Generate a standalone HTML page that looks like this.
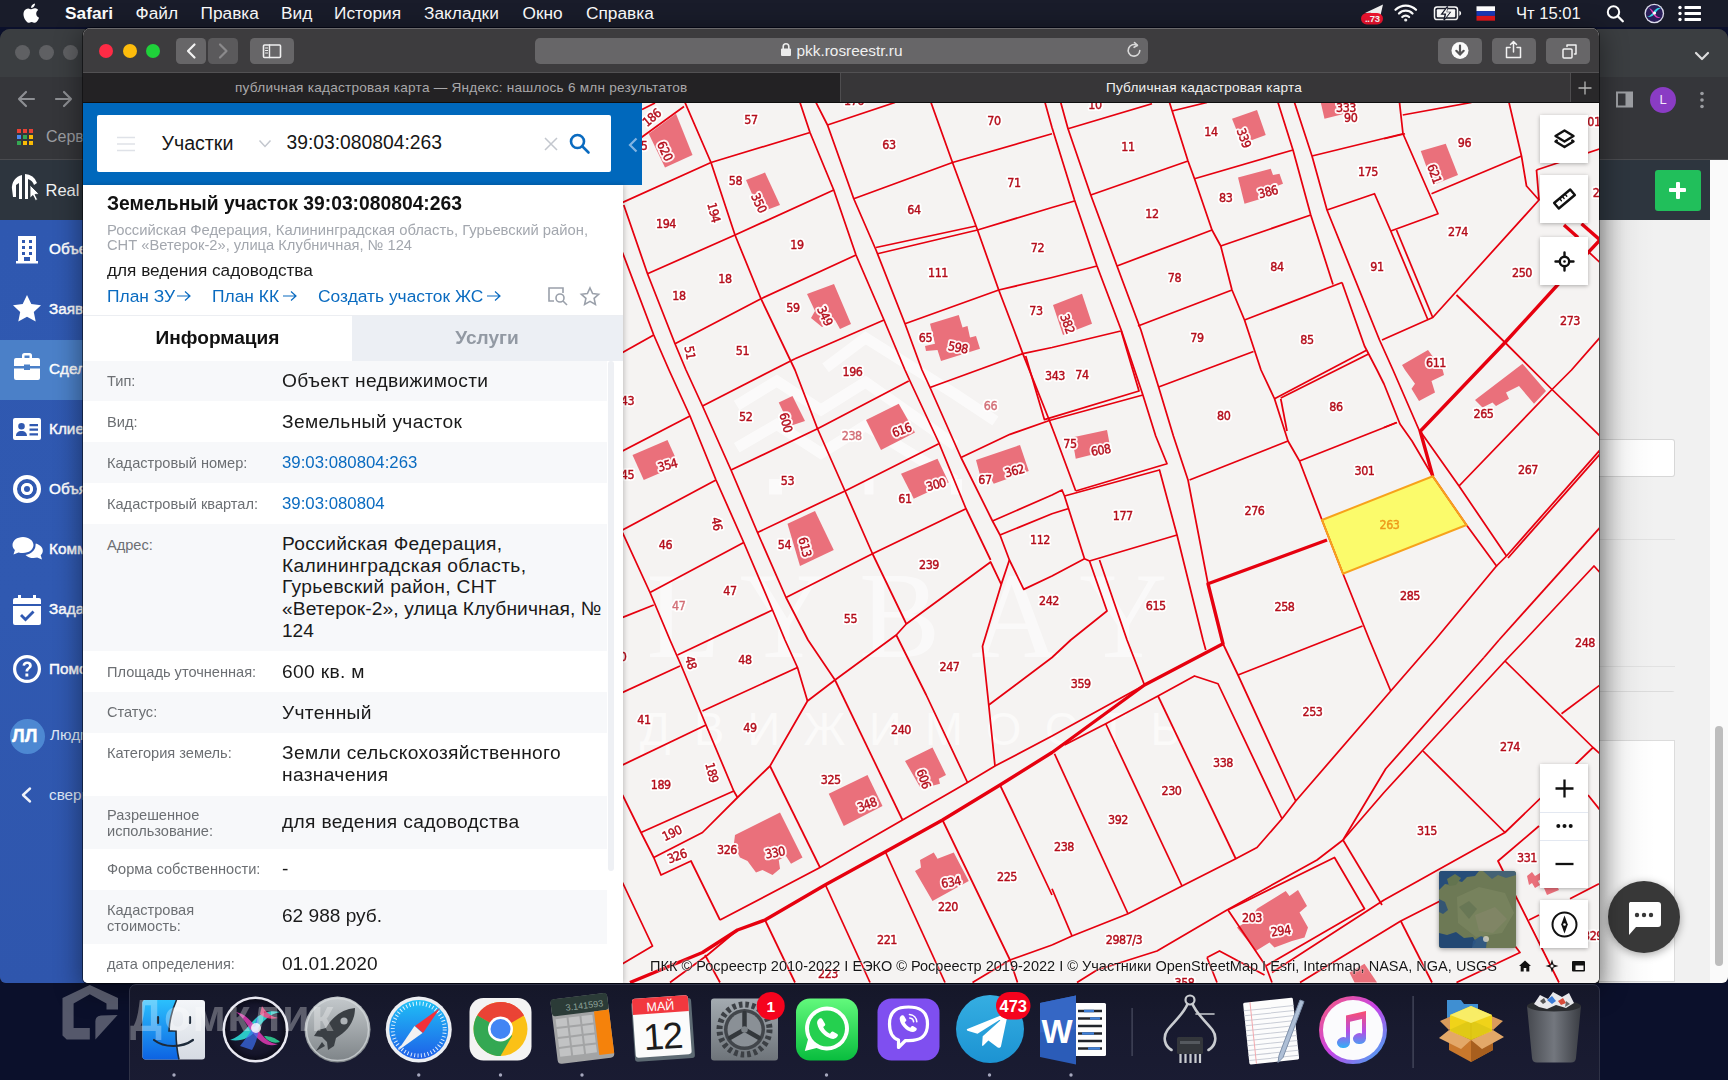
<!DOCTYPE html>
<html lang="ru">
<head>
<meta charset="utf-8">
<title>Публичная кадастровая карта</title>
<style>
*{box-sizing:border-box;margin:0;padding:0}
html,body{width:1728px;height:1080px;overflow:hidden;background:#13172b;font-family:"Liberation Sans",sans-serif;}
.abs{position:absolute}
#desk{position:absolute;left:0;top:0;width:1728px;height:1080px;background:#0b102b;overflow:hidden}
/* menu bar */
#menubar{position:absolute;left:0;top:0;width:1728px;height:27px;background:#191c2a;color:#fff;font-size:17.300px;line-height:27px;white-space:nowrap}
#menubar span{position:absolute;top:0}
/* chrome window behind */
#chrome{position:absolute;left:0;top:29px;width:1728px;height:954px;background:#35363a;border-radius:10px 10px 6px 6px;overflow:hidden}
/* safari */
#safari{position:absolute;left:83px;top:28px;width:1516px;height:955px;background:#f5f3f2;border-radius:8px 8px 5px 5px;overflow:hidden;box-shadow:0 0 0 1px rgba(0,0,0,.5),0 6px 26px 3px rgba(0,0,0,.4)}
#stool{position:absolute;left:0;top:0;width:1516px;height:45px;background:#39383a;border-top:1px solid #5a595b}
#stabs{position:absolute;left:0;top:45px;width:1516px;height:30px;background:#1f1e20;border-top:1px solid #4c4b4d;border-bottom:1px solid #0c0c0d;color:#b4b4b4;font-size:13px;line-height:28px}
.tbbtn{position:absolute;top:9px;height:27px;background:#656466;border-radius:5px}
/* pkk */
#pkkhead{position:absolute;left:0;top:75px;width:558px;height:82px;background:#0a67b8}
#search{position:absolute;left:14px;top:12px;width:514px;height:57px;background:#fff;border-radius:2px}
#panel{position:absolute;left:0;top:157px;width:539px;height:797px;background:#fff;box-shadow:2px 0 6px rgba(0,0,0,.18)}
.row{position:absolute;left:0;width:524px}
.row.g{background:#f7f8fa}
.lab{position:absolute;left:24px;font-size:14px;color:#6c6f73;line-height:15.5px}
.val{position:absolute;left:199px;font-size:18px;color:#1a1a1a;line-height:21.5px;white-space:nowrap}
.val.lnk{font-size:16px;color:#0a6bc0}
a{color:#0a6bc0;text-decoration:none}
.mbtn{background:#fff;box-shadow:0 1px 4px rgba(0,0,0,.3)}
</style>
</head>
<body>
<div id="desk">

<!-- ===== background chrome window ===== -->
<div id="chrome">
  <div class="abs" style="left:0;top:0;width:1728px;height:48px;background:#3b3e41"></div>
  <div class="abs" style="left:0;top:48px;width:1728px;height:83px;background:#35363a"></div>
  <div class="abs" style="left:0;top:130px;width:1728px;height:1px;background:#4a4b4f"></div>
  <!-- traffic lights (inactive) -->
  <div class="abs" style="left:15px;top:16px;width:15px;height:15px;border-radius:50%;background:#5f6063"></div>
  <div class="abs" style="left:39px;top:16px;width:15px;height:15px;border-radius:50%;background:#5f6063"></div>
  <div class="abs" style="left:63px;top:16px;width:15px;height:15px;border-radius:50%;background:#5f6063"></div>
  <!-- nav arrows -->
  <svg class="abs" style="left:14px;top:58px" width="70" height="24" viewBox="0 0 70 24" fill="none" stroke="#8d8f93" stroke-width="2.2" stroke-linecap="round" stroke-linejoin="round"><path d="M20 12H5M12 5l-7 7 7 7"/><path d="M42 12h15M50 5l7 7-7 7"/></svg>
  <!-- apps grid -->
  <svg class="abs" style="left:17px;top:100px" width="18" height="18" viewBox="0 0 18 18"><g><rect x="0" y="0" width="4" height="4" fill="#e94235"/><rect x="6" y="0" width="4" height="4" fill="#e94235"/><rect x="12" y="0" width="4" height="4" fill="#e94235"/><rect x="0" y="6" width="4" height="4" fill="#4a8af4"/><rect x="6" y="6" width="4" height="4" fill="#35a853"/><rect x="12" y="6" width="4" height="4" fill="#fabb05"/><rect x="0" y="12" width="4" height="4" fill="#35a853"/><rect x="6" y="12" width="4" height="4" fill="#fabb05"/><rect x="12" y="12" width="4" height="4" fill="#fabb05"/></g></svg>
  <div class="abs" style="left:46px;top:98px;font-size:16px;color:#9c9ea2;line-height:20px">Сервисы</div>
  <!-- page header left -->
  <div class="abs" style="left:0;top:131px;width:1710px;height:60px;background:#2d353e"></div>
  <div class="abs" style="left:45.500px;top:150px;font-size:16.500px;color:#f4f4f4;line-height:22px">Real</div>
  <svg class="abs" style="left:10px;top:142px" width="34" height="34" viewBox="0 0 34 34"><path d="M2 18a13 13 0 0 1 10-14v24H9V12l-3 2v12H3z" fill="#fff"/><path d="M15 3a13 13 0 0 1 12 9l-3 2a9 9 0 0 0-6-6v20h-3z" fill="#fff"/><path d="M20 14l9 9-4 .5 2.500 5-2 1-2.500-5-3 2.500z" fill="#fff" stroke="#2d353e" stroke-width=".8"/></svg>
  <!-- sidebar -->
  <div class="abs" style="left:0;top:191px;width:90px;height:764px;background:linear-gradient(180deg,#2f58b0 0%,#3059b1 50%,#2f56ad 100%)"></div>
  <div class="abs" style="left:0;top:311px;width:90px;height:60px;background:#4b80c8"></div>
  <!-- right side page -->
  <div class="abs" style="left:1599px;top:191px;width:111px;height:764px;background:#f1f1f1"></div>
  <div class="abs" style="left:1710px;top:131px;width:18px;height:824px;background:#fafafa"></div>
  <div class="abs" style="left:1715px;top:697px;width:8px;height:240px;border-radius:4px;background:#bdbdbd"></div>
  <div class="abs" style="left:1655px;top:141px;width:46px;height:41px;border-radius:3px;background:#21bf5b"></div>
  <div class="abs" style="left:1669px;top:159px;width:17px;height:4px;background:#fff;border-radius:1px"></div>
  <div class="abs" style="left:1675.500px;top:152.500px;width:4px;height:17px;background:#fff;border-radius:1px"></div>
</div>

<!-- ===== menubar ===== -->
<div id="menubar">
  <svg class="abs" style="left:22px;top:2px" width="20" height="22" viewBox="0 0 20 22" fill="#fff"><path d="M14.200 11.600c0-2.300 1.900-3.400 2-3.500-1.100-1.600-2.800-1.800-3.400-1.800-1.400-.1-2.800.9-3.500.9-.7 0-1.900-.8-3.100-.8-1.600 0-3.100.9-3.900 2.400-1.700 2.900-.4 7.200 1.200 9.500.8 1.100 1.700 2.400 3 2.400 1.200 0 1.700-.8 3.100-.8 1.500 0 1.900.8 3.200.8 1.300 0 2.100-1.200 2.900-2.300.9-1.300 1.300-2.600 1.300-2.700 0 0-2.800-1-2.800-4.100z"/><path d="M12 4.500c.7-.8 1.100-1.900 1-3-1 .1-2.100.7-2.800 1.500-.6.700-1.200 1.800-1 2.900 1.100.1 2.100-.5 2.800-1.400z"/></svg>
  <span style="left:65px;font-weight:bold">Safari</span>
  <span style="left:135.500px">Файл</span>
  <span style="left:200.500px">Правка</span>
  <span style="left:281px">Вид</span>
  <span style="left:334px">История</span>
  <span style="left:424px">Закладки</span>
  <span style="left:522.500px">Окно</span>
  <span style="left:586px">Справка</span>
  <span style="left:1516px;font-size:16.600px">Чт 15:01</span>
  <svg class="abs" style="left:1355px;top:0" width="360" height="27" viewBox="1355 0 360 27" fill="none">
    <path d="M1365 13l18-8.500-3 13-6-3-2.500 3-.8-4.800z" fill="#f2f2f2"/>
    <rect x="1361" y="13" width="22" height="11.500" rx="5.750" fill="#f0142f"/>
    <text x="1372.300" y="22.300" font-family="'Liberation Sans',sans-serif" font-size="9.500" font-weight="bold" fill="#fff" text-anchor="middle" letter-spacing="-.3">..73</text>
    <g stroke="#fff" stroke-width="2.300" stroke-linecap="round"><path d="M1395.500 9.800a14.500 14.500 0 0 1 20.500 0"/><path d="M1399 13.500a9.500 9.500 0 0 1 13.500 0"/><path d="M1402.300 17a4.800 4.800 0 0 1 6.800 0"/></g><circle cx="1405.700" cy="20" r="1.600" fill="#fff"/>
    <rect x="1434.500" y="7" width="23" height="12.500" rx="2.600" stroke="#fff" stroke-width="1.500"/><path d="M1459.300 10.800v5c1.300-.3 1.800-1.500 1.800-2.500s-.5-2.200-1.800-2.500z" fill="#fff"/><rect x="1436.800" y="9.200" width="18.400" height="8.100" rx="1" fill="#fff"/><path d="M1447.600 6.500l-5.800 7.500h3.600l-1.400 6 5.900-7.600h-3.700z" fill="#171a2b" stroke="#171a2b" stroke-width="1.400"/><path d="M1447.400 7.500l-4.500 6h3.300l-1 4.800 4.600-6.100h-3.300z" fill="#fff"/>
    <rect x="1476.500" y="6.300" width="18.500" height="4.800" fill="#fff"/><rect x="1476.500" y="11.100" width="18.500" height="4.800" fill="#1939b7"/><rect x="1476.500" y="15.900" width="18.500" height="4.800" fill="#e4181c"/>
    <circle cx="1613.500" cy="12" r="5.700" stroke="#fff" stroke-width="2"/><path d="M1617.800 16.300l5 5" stroke="#fff" stroke-width="2.300" stroke-linecap="round"/>
    <circle cx="1654.300" cy="13.500" r="9.800" fill="#dcdcec"/><circle cx="1654.300" cy="13.500" r="8.500" fill="#2a1f5a"/><path d="M1647 17c4-1 6-5 8-7 2-2 4-2.500 6-2-3 1-4 3-6 5.500-2 2.500-4 4-8 3.500z" fill="#35d6e6"/><path d="M1649 8c3 1 4.500 3.500 6 6 1.500 2 3 3.500 5.500 3.500-3 1.500-5.500-.5-7.200-3-1.500-2.300-2.500-4.700-4.300-6.500z" fill="#e43fb4"/><circle cx="1654.500" cy="13" r="1.600" fill="#fff"/>
    <g fill="#fff"><circle cx="1680" cy="7.500" r="1.700"/><circle cx="1680" cy="13.500" r="1.700"/><circle cx="1680" cy="19.500" r="1.700"/><rect x="1684.500" y="6.100" width="16.500" height="2.800" rx=".6"/><rect x="1684.500" y="12.100" width="16.500" height="2.800" rx=".6"/><rect x="1684.500" y="18.100" width="16.500" height="2.800" rx=".6"/></g>
  </svg>
</div>

<!-- chrome page sidebar items (page coords) -->
<div class="abs" style="left:0;top:0;width:1728px;height:1080px;color:#fff;font-size:15.300px;font-weight:normal;-webkit-text-stroke:.45px #fff;white-space:nowrap">
<svg class="abs" style="left:10px;top:232px" width="36" height="590" viewBox="0 0 36 590" fill="#fff">
<path d="M8 4h18v26h-6v-5h-6v5H8zM12 8v3h3V8zm7 0v3h3V8zm-7 6v3h3v-3zm7 0v3h3v-3zm-7 6v3h3v-3zm7 0v3h3v-3z" fill-rule="evenodd"/><rect x="6" y="29" width="22" height="2.500"/>
<path d="M17 63l4.300 9 9.700 1.200-7.200 6.700 1.900 9.600L17 84.700 8.300 89.500l1.900-9.600L3 73.200 12.700 72z"/>
<path d="M12 126v-2.500a2.500 2.500 0 0 1 2.500-2.500h5a2.500 2.500 0 0 1 2.500 2.500V126h6a2 2 0 0 1 2 2v6h-10v-1.500h-6V134H4v-6a2 2 0 0 1 2-2zm2.500 0h5v-2.500h-5zM4 136.500h10v1.500h6v-1.500h10V146a2 2 0 0 1-2 2H6a2 2 0 0 1-2-2z" fill-rule="evenodd"/>
<path d="M5 186h24a2 2 0 0 1 2 2v18a2 2 0 0 1-2 2H5a2 2 0 0 1-2-2v-18a2 2 0 0 1 2-2zm6.500 5a3.300 3.300 0 1 0 0 6.600 3.300 3.300 0 0 0 0-6.600zM6 204h11c0-3-2-5-5.500-5S6 201 6 204zm13.500-12v2.200H28V192zm0 4.600v2.200H28v-2.200zm0 4.600v2.200H28v-2.200z" fill-rule="evenodd"/>
<path d="M17 243a14 14 0 1 0 0 28 14 14 0 0 0 0-28zm0 4a10 10 0 1 1 0 20 10 10 0 0 1 0-20zm0 4a6 6 0 1 0 0 12 6 6 0 0 0 0-12z" fill-rule="evenodd"/><circle cx="17" cy="257" r="6" fill="#fff"/><circle cx="17" cy="257" r="3" fill="#3059b1"/>
<path d="M13 305c-6 0-10.500 3.600-10.500 8 0 2 .9 3.700 2.400 5.100L3.500 322.500l5-2c1.400.4 2.900.6 4.500.6 6 0 10.500-3.600 10.500-8s-4.500-8.100-10.500-8.100z"/><path d="M25.500 313.500c0 4.600-4.300 8.500-10 9.400 1.800 1.900 4.700 3.100 8 3.100 1.300 0 2.600-.2 3.700-.5l4.800 2-1.300-4.200c1.300-1.300 2.100-2.900 2.100-4.600 0-3.300-2.900-6.100-7-7.200-.2.600-.3 1.300-.3 2z"/>
<path d="M8 363h3v3h12v-3h3v3h3a2 2 0 0 1 2 2v4H3v-4a2 2 0 0 1 2-2h3zM3 374h28v17a2 2 0 0 1-2 2H5a2 2 0 0 1-2-2zm19.500 4.500l-7 7-3.500-3.500-2 2 5.500 5.500 9-9z" fill-rule="evenodd"/>
<path d="M17 423a14 14 0 1 0 0 28 14 14 0 0 0 0-28zm0 3.200a10.800 10.800 0 1 1 0 21.600 10.800 10.800 0 0 1 0-21.600z" fill-rule="evenodd"/><path d="M12.500 433.500c.3-2.600 2.200-4 4.700-4 2.600 0 4.600 1.600 4.600 3.900 0 3.200-3.600 3.400-3.600 6.100h-2.700c0-3.600 3.500-4 3.500-6 0-1-.8-1.600-1.900-1.600-1.200 0-1.900.7-2 1.900zM15.400 441.500h2.900v2.900h-2.900z"/>
<path d="M20 556.500l-7 6.500 7 6.500" fill="none" stroke="#f0f3fa" stroke-width="2.400" stroke-linecap="round" stroke-linejoin="round"/>
</svg>
<div class="abs" style="left:10px;top:718.500px;width:35px;height:35px;border-radius:50%;background:#4d88d2"></div>
<div class="abs" style="left:12px;top:726px;font-size:18px;line-height:20px;font-weight:bold">ЛЛ</div>
<div class="abs" style="left:49px;top:240px;line-height:18px">Объекты</div>
<div class="abs" style="left:49px;top:300px;line-height:18px">Заявки</div>
<div class="abs" style="left:49px;top:360px;line-height:18px">Сделки</div>
<div class="abs" style="left:49px;top:420px;line-height:18px">Клиенты</div>
<div class="abs" style="left:49px;top:480px;line-height:18px">Объявления</div>
<div class="abs" style="left:49px;top:540px;line-height:18px">Коммуникации</div>
<div class="abs" style="left:49px;top:600px;line-height:18px">Задачи</div>
<div class="abs" style="left:49px;top:660px;line-height:18px">Помощь</div>
<div class="abs" style="left:50px;top:726px;line-height:18px;font-weight:normal;-webkit-text-stroke:0;color:#dfe8f7">Людмила</div>
<div class="abs" style="left:49px;top:786px;line-height:18px;font-weight:normal;-webkit-text-stroke:0;color:#dfe8f7">свернуть</div>
<!-- right chrome toolbar icons -->
<svg class="abs" style="left:1690px;top:48px" width="24" height="16" viewBox="0 0 24 16" fill="none" stroke="#dcdcdc" stroke-width="2.200" stroke-linecap="round" stroke-linejoin="round"><path d="M6 5l6 6 6-6"/></svg>
<svg class="abs" style="left:1615px;top:90px" width="20" height="20" viewBox="0 0 20 20"><rect x="2" y="2.500" width="15" height="14" fill="none" stroke="#9b9da1" stroke-width="2"/><rect x="10.500" y="2.500" width="6.500" height="14" fill="#9b9da1"/></svg>
<div class="abs" style="left:1650px;top:86.500px;width:26px;height:26px;border-radius:50%;background:#8a3cc4"></div>
<div class="abs" style="left:1650px;top:90px;width:26px;text-align:center;font-size:13px;line-height:19px;font-weight:normal;-webkit-text-stroke:0;color:#f3e9fb">L</div>
<svg class="abs" style="left:1698px;top:90px" width="8" height="20" viewBox="0 0 8 20" fill="#9b9da1"><circle cx="4" cy="3.500" r="1.800"/><circle cx="4" cy="10" r="1.800"/><circle cx="4" cy="16.500" r="1.800"/></svg>
<!-- right page content bits -->
<div class="abs" style="left:1599px;top:439px;width:76px;height:38px;background:#fff;border:1px solid #d7d7d7;border-left:none;border-radius:0 3px 3px 0"></div>
<div class="abs" style="left:1599px;top:539px;width:76px;height:1px;background:#e2e2e2"></div>
<div class="abs" style="left:1599px;top:666px;width:76px;height:1px;background:#e2e2e2"></div>
<div class="abs" style="left:1599px;top:691px;width:76px;height:291px;background:#fff;border:1px solid #dcdcdc;border-left:none;border-radius:0 3px 0 0"></div>
<div class="abs" style="left:1599px;top:692px;width:76px;height:49px;background:#f1f1f1;border-bottom:1px solid #dcdcdc"></div>
<div class="abs" style="left:1599px;top:220px;width:56px;height:764px;background:linear-gradient(90deg,rgba(0,0,0,.17) 0,rgba(0,0,0,.1) 9px,rgba(0,0,0,.045) 24px,rgba(0,0,0,.012) 42px,rgba(0,0,0,0) 56px)"></div>
<!-- chat button -->
<div class="abs" style="left:1608px;top:881px;width:72px;height:72px;border-radius:50%;background:#383838;box-shadow:0 2px 8px rgba(0,0,0,.35)"></div>
<svg class="abs" style="left:1624px;top:899px" width="40" height="40" viewBox="0 0 40 40"><path d="M6 3h28a3 3 0 0 1 3 3v19a3 3 0 0 1-3 3H12l-7 8V28 6a3 3 0 0 1 1-3z" fill="#fff"/><circle cx="13" cy="16" r="2.200" fill="#383838"/><circle cx="20" cy="16" r="2.200" fill="#383838"/><circle cx="27" cy="16" r="2.200" fill="#383838"/></svg>
</div>
<!-- ===== safari window ===== -->
<div id="safari"><div id="sp" class="abs" style="left:-83px;top:-28px;width:1728px;height:1080px">
<div class="abs" style="left:83px;top:28px;width:1516px;height:45px;background:#3d3c3e;border-top:1px solid #6a696b"></div>
<div class="abs" style="left:83px;top:72px;width:1516px;height:31px;background:#232224;border-top:1px solid #525153;border-bottom:1px solid #0e0e0f"></div>
<div class="abs" style="left:840px;top:73px;width:731px;height:29px;background:#373638;border-left:1px solid #4e4d4f;border-right:1px solid #4e4d4f"></div>
<div class="abs" style="left:1571px;top:73px;width:28px;height:29px;background:#29282a"></div>
<!-- traffic lights -->
<div class="abs" style="left:98.5px;top:43.700px;width:14px;height:14px;border-radius:50%;background:#fe2b45"></div>
<div class="abs" style="left:122.500px;top:43.700px;width:14px;height:14px;border-radius:50%;background:#fdbc0c"></div>
<div class="abs" style="left:146.300px;top:43.700px;width:14px;height:14px;border-radius:50%;background:#1fd13a"></div>
<!-- toolbar buttons -->
<div class="abs" style="left:176px;top:37.500px;width:30px;height:26px;background:#676668;border-radius:4.500px"></div>
<div class="abs" style="left:208px;top:37.500px;width:29.500px;height:26px;background:#5b5a5c;border-radius:4.500px"></div>
<div class="abs" style="left:249.500px;top:37.500px;width:44.500px;height:26px;background:#676668;border-radius:4.500px"></div>
<svg class="abs" style="left:176px;top:37.500px" width="120" height="26" viewBox="0 0 120 26" fill="none" stroke-linecap="round" stroke-linejoin="round"><path d="M18.500 6.500L12 13l6.500 6.500" stroke="#f2f2f2" stroke-width="2.200"/><path d="M44 6.500L50.500 13 44 19.500" stroke="#8b8a8c" stroke-width="2.200"/><rect x="87.500" y="7" width="17" height="12.500" rx="1" stroke="#f0f0f0" stroke-width="1.600"/><path d="M93.500 7v12.500" stroke="#f0f0f0" stroke-width="1.400"/><path d="M89.500 10h2.200M89.500 12.500h2.200M89.500 15h2.200" stroke="#f0f0f0" stroke-width="1"/></svg>
<!-- url bar -->
<div class="abs" style="left:535px;top:37.500px;width:613px;height:26px;background:#676668;border-radius:5px"></div>
<div class="abs" style="left:796.500px;top:40.500px;font-size:15.400px;line-height:20px;color:#f0f0f0;white-space:nowrap">pkk.rosreestr.ru</div>
<svg class="abs" style="left:780px;top:42px" width="12" height="15" viewBox="0 0 12 15"><rect x="1" y="6.500" width="10" height="7.500" rx="1" fill="#ececec"/><path d="M3.200 7V4.500a2.800 2.800 0 0 1 5.600 0V7" fill="none" stroke="#ececec" stroke-width="1.600"/></svg>
<svg class="abs" style="left:1125px;top:41px" width="18" height="18" viewBox="0 0 18 18" fill="none" stroke="#d8d8d8" stroke-width="1.600" stroke-linecap="round"><path d="M14.800 9.500a5.800 5.800 0 1 1-2.600-5"/><path d="M9.500 1.500l3 2.800-3.400 2" stroke-linejoin="round"/></svg>
<!-- right buttons -->
<div class="abs" style="left:1437.500px;top:37.500px;width:44.500px;height:26px;background:#676668;border-radius:4.500px"></div>
<div class="abs" style="left:1491.500px;top:37.500px;width:44.500px;height:26px;background:#676668;border-radius:4.500px"></div>
<div class="abs" style="left:1545.500px;top:37.500px;width:44.500px;height:26px;background:#676668;border-radius:4.500px"></div>
<svg class="abs" style="left:1437px;top:37px" width="154" height="27" viewBox="0 0 154 27" fill="none" stroke="#f2f2f2" stroke-linecap="round" stroke-linejoin="round"><circle cx="23" cy="13.500" r="8.500" fill="#fbfbfb" stroke="none"/><path d="M23 8.500v8.500M19.300 13.800L23 17.600l3.700-3.800" stroke="#555456" stroke-width="2.200"/><path d="M73 10.500h-3.500v10h14v-10H80" stroke-width="1.500"/><path d="M76.500 15V5M73.500 7.500l3-3 3 3" stroke-width="1.500"/><rect x="126" y="12" width="9" height="9" rx="1" stroke-width="1.500"/><path d="M130 9.500V8h9v9h-1.500" stroke-width="1.500"/></svg>
<!-- tab titles -->
<div class="abs" style="left:235px;top:79px;font-size:13.600px;line-height:18px;color:#a9a8aa;white-space:nowrap;letter-spacing:.24px">публичная кадастровая карта — Яндекс: нашлось 6 млн результатов</div>
<div class="abs" style="left:1004px;top:79px;width:400px;text-align:center;font-size:13.600px;line-height:18px;color:#f1f1f1;white-space:nowrap;letter-spacing:.2px">Публичная кадастровая карта</div>
<svg class="abs" style="left:1577px;top:80px" width="16" height="16" viewBox="0 0 16 16" fill="none" stroke="#b5b5b5" stroke-width="1.300"><path d="M8 1.500v13M1.500 8h13"/></svg>
<svg class="abs" style="left:623px;top:103px" width="976" height="880" viewBox="623 103 976 880">
<rect x="623" y="103" width="976" height="880" fill="#f5f3f2"/>
<g fill="none" stroke="#ffffff" stroke-width="11" opacity=".65" stroke-linejoin="miter"><polyline points="825.5,367.8 865.5,337.8 955.5,394.4 995.5,421"/><polyline points="736.7,405.5 776.7,381 821,410 865.5,382 955.5,445.5"/><polyline points="736.7,447.8 776.7,424.4 821,453.3 865.5,425.5 955.5,481"/></g><g fill="#ffffff" opacity=".65"><rect x="769" y="479" width="13" height="15.5"/><rect x="864.5" y="479" width="9" height="15.5"/><rect x="951" y="479" width="11" height="15.5"/></g>
<text x="541" y="657" fill="#ffffff" opacity=".55" font-family="'Liberation Serif',serif" font-size="122" letter-spacing="31">ELYBAY</text>
<text x="530" y="745" fill="#ffffff" opacity=".6" font-family="'Liberation Sans',sans-serif" font-size="45.5" letter-spacing="23.3">НЕДВИЖИМОСТЬ</text>
<g fill="#ea707b">
<polygon points="648.75,133.75 676,113.75 692.5,155 665,167.5"/>
<polygon points="746,180 765,172.5 780,205 760,212.5"/>
<polygon points="807,294 834,284 851,324 840,329 835,320 822,327 811,318 815,311"/>
<polygon points="930,323.75 958.75,315 962.5,327.5 967.5,326 970,337.5 976,336 980,348.75 941,361 937.5,350 926,351 925,346 935,343.75"/>
<polygon points="1053,305 1082,293.75 1092,323.75 1063,335"/>
<polygon points="1232,118.75 1257,110 1265.75,135 1242,143.75"/>
<polygon points="1238,177.5 1270.75,168.75 1273,175 1279.5,173.75 1283,183.75 1277,186 1278,193.75 1244.5,203.75"/>
<polygon points="1320.75,102.5 1342,102.5 1344.5,113.75 1324.5,118.75"/>
<polygon points="1420.75,151 1445.75,143.75 1458,175 1433,185"/>
<polygon points="1402,365 1428,350 1442.75,370 1444,375 1431.5,381 1435,392.5 1419,401 1411.5,388.75 1415,383.75 1405,370"/>
<polygon points="632.5,455 667.5,440 678.75,465 643.75,480"/>
<polygon points="778.75,402.5 792.5,396 805,421 790,426"/>
<polygon points="866,420 898.75,403.75 915,432.5 881,450"/>
<polygon points="901,473.75 937.5,458.75 948.75,482.5 913.75,498.75"/>
<polygon points="976,460 1020,445 1028.75,471 993.75,483.75 987.5,472.5 980,475"/>
<polygon points="787.5,523.75 815,511 833.75,550 800,566"/>
<polygon points="1072,437.5 1107,430 1110.75,450 1075.75,458.75"/>
<polygon points="1475,400 1522.5,363.75 1546,391 1534,403.75 1519,386 1506,392.5 1509,398.75 1496,406 1492.5,402.5 1482.5,407.5"/>
<polygon points="905,761 932.5,747.5 946,775 938.75,778.75 940,783.75 921,788.75"/>
<polygon points="828.75,793.75 867.5,775 882.5,806 843.75,826"/>
<polygon points="735,835 780,812.5 802.5,857.5 791,863.75 786,856 778.75,860 780,868.75 772.5,875 762.5,870 756,872.5 747.5,861 740,857.5 733.75,845"/>
<polygon points="915,871 921,867.5 920,860 933.75,852.5 937.5,858.75 953.75,852.5 968.75,881 932.5,901"/>
<polygon points="1237,927.5 1249.5,920 1257,908.75 1285.75,891 1289.5,896 1298,890 1307,906 1299.5,912.5 1308,927.5 1304.5,937.5 1292,941 1274.5,947.5 1269.5,942.5 1255.75,951 1247,940"/>
<polygon points="1349.5,972.5 1364.5,963.75 1377,982.5 1354.5,982.5"/>
<polygon points="1527,876 1532,872 1535,876 1540,873 1543,878 1538,881 1540,885 1535,888 1532,883 1529,885"/>
<polygon points="1544,888 1556,884 1559,890 1547,895"/>
</g>
<polygon points="1322,520 1432.75,476.25 1466.5,525 1343,573.75" fill="#fbfb6b"/>
<g fill="none" stroke="#e6000f" stroke-width="1.75" stroke-linejoin="round">
<polyline points="800,102.5 810,132.5 833.75,190 856,255 884,320 905,370 910,381 938.75,442.5 966,508.75 990.6,560"/>
<polyline points="1009.4,560 1001.25,584.4 982.5,646.25 988.75,705 995,766"/>
<polyline points="816,102.5 827.5,125 853.75,198.75 876,250 905,323.75 922,370 930,387.5 961,457.5 992.5,521 1000,535 1009.4,560 1023.75,589.4 1052,576 1084.5,558.75"/>
<polyline points="685,102.5 711,162.5 735,235 761,298.75 795,370 817.5,428.75 845,491 872.5,553.75 906.25,623.75"/>
<polyline points="896.25,635 926.25,695 967.5,782.5"/>
<polyline points="623.75,205 647.5,273.75 675,343.75 686,370 702.5,406 731,470 757.5,532.5 786,597.5 808,640 835,680"/>
<polyline points="622.5,252.5 653.75,335 669,370 690,416 716,480 743.75,542.5 772.5,610 785,640 797.5,667.5 807.5,701"/>
<polyline points="931,102.5 952.5,162.5 977.5,230 998.75,290 1014,330 1022.8,353.6 1049.4,420.5 1055.3,436 1075.75,491"/>
<polyline points="1045,102.5 1052,127.5 1074.5,200 1097,266 1121.2,330 1142.9,395 1155.7,436 1167,463.75 1075.75,491"/>
<polyline points="1025.7,356 1044.4,419.6 1139,391 1121.2,331"/>
<polyline points="1142.9,395 1049.4,420.5 1010,434.3 961,457.5"/>
<polyline points="1060.75,102.5 1068,128.75 1090.75,195 1117,266 1140.9,330 1158.6,387 1173.4,436 1188,480 1208,583.75"/>
<polyline points="1169.5,102.5 1188,161 1194.5,178.75 1212,230 1220.75,246 1232,290 1244.5,320 1261,370 1274.5,398.75 1288,441 1299.5,461 1322,520 1343,573.75 1369.5,640 1390.75,691"/>
<polyline points="1278,102.5 1293,150 1310.75,215 1333,284.5"/>
<polyline points="1342,282.5 1364.5,346 1377,370 1384,384 1400,424 1412,441 1432.75,476.25"/>
<polyline points="1294.5,102.5 1312,156 1327,210 1379.5,340 1393,370 1419.5,431"/>
<polyline points="1420.25,431.25 1459,486 1506.5,556"/>
<polyline points="1432.75,476.25 1466.5,525 1496.5,566 1435,640 1390.75,691 1295.75,801 1282,818.75 1257,847.5 1235.75,858.75 1182,886 1128,913.75 1072,936 1052,945"/>
<polyline points="1506.5,556 1496.5,566"/>
<polyline points="623,151 642,137 684,106.5"/>
<polyline points="642,109.5 655,103"/>
<polyline points="622.5,202.5 711,162.5 810,132.5"/>
<polyline points="647.5,273.75 735,235 833.75,190"/>
<polyline points="675,343.75 761,298.75 856,255"/>
<polyline points="622.5,352.5 653.75,335"/>
<polyline points="795,358.75 884,320"/>
<polyline points="827.5,125 895,102.5"/>
<polyline points="853.75,198.75 952.5,162.5 1052,133.75"/>
<polyline points="876,247.5 976,226"/>
<polyline points="877.5,253.75 977.5,230 1052,207.5 1074.5,201"/>
<polyline points="905,323.75 998.75,290 1052,277.5 1097,266"/>
<polyline points="1022.8,353.6 1052,347.5 1120.75,331"/>
<polyline points="1068,128.75 1152,103.75"/>
<polyline points="1172,111 1207,102.5"/>
<polyline points="1090.75,195 1188,161"/>
<polyline points="1117,266 1212,230"/>
<polyline points="1138,326 1232,290"/>
<polyline points="1158.6,387 1253.5,351.5"/>
<polyline points="1194.5,178.75 1293,150"/>
<polyline points="1220.75,246 1310.75,215"/>
<polyline points="1244.5,320 1342,282.5"/>
<polyline points="1312,156 1403,133.75"/>
<polyline points="1327,210 1374.5,193.75 1390.75,231 1428,320"/>
<polyline points="1396.5,230 1432.75,317.5"/>
<polyline points="1399.5,102.5 1403,133.75 1438,213.75 1390.75,231"/>
<polyline points="1402.75,115 1471.5,102.5"/>
<polyline points="1384,138.75 1405,133.75"/>
<polyline points="1431.5,193.75 1521.5,156"/>
<polyline points="1509,102.5 1521.5,156 1526.5,186 1539,200 1432.75,317.5 1382,340"/>
<polyline points="1456.5,295 1505,342.5 1550,387.5 1600,436"/>
<polyline points="1536.5,170 1539,200"/>
<polyline points="1536.5,170 1600,148.75"/>
<polyline points="1600,337.5 1571.5,370 1551.5,390 1459,486"/>
<polyline points="1586.5,250 1600,262.5"/>
<polyline points="702.5,406 795,358.75"/>
<polyline points="731,470 817.5,428.75 908.75,381"/>
<polyline points="757.5,532.5 845,491 938.75,443.75"/>
<polyline points="786,597.5 872.5,553.75 966,508.75"/>
<polyline points="835,680 896.25,635 906.25,624 990.6,562 1001.25,584.4"/>
<polyline points="622.5,451 690,416"/>
<polyline points="622.5,530 716,480"/>
<polyline points="650,592.5 743.75,542.5"/>
<polyline points="622.5,617.5 653.75,605"/>
<polyline points="622.5,532.5 650,592.5 670,640 681,665 706,725 733.75,791 737.5,797.5"/>
<polyline points="930,387.5 1022.8,353.6"/>
<polyline points="992.5,521 1052,495 1062,490 1064.5,496 1084.5,558.75 1089.5,561 1107,611 1070.75,640 1052,657.5 988.75,705"/>
<polyline points="1000,535 1052,513.75 1068,508.75"/>
<polyline points="1064.5,496 1159.5,470 1177,535 1089.5,561"/>
<polyline points="1177,535 1203,640 1205.75,650"/>
<polyline points="1099.5,560 1127,640 1144.5,685"/>
<polyline points="1189.5,480 1288,441"/>
<polyline points="1280.75,398.75 1287,431"/>
<polyline points="1299.5,461 1397,422.5"/>
<polyline points="1384,427.5 1396.5,422.5"/>
<polyline points="1506.5,556 1600,450"/>
<polyline points="1508,558 1600,454"/>
<polyline points="1600,527.5 1499,640"/>
<polyline points="1600,572.5 1594,566 1525,640 1505,661 1423,750 1384,792.5 1343,840"/>
<polyline points="835,680 807.5,701 770,766 737.5,797.5 702.5,832.5 653.75,857.5"/>
<polyline points="835,680 902.5,820"/>
<polyline points="770,766 820,867.5"/>
<polyline points="720,920 820,867.5 902.5,820 967.5,782.5 995,766 1052,736 1144.5,685"/>
<polyline points="825,884 870,982.5"/>
<polyline points="885,851 945,982.5"/>
<polyline points="942.5,820 1010,960 1017.5,982.5"/>
<polyline points="1000,785 1012,810 1052,895"/>
<polyline points="622.5,692.5 680,666"/>
<polyline points="677.5,655 772.5,610"/>
<polyline points="702.5,711 797.5,667.5"/>
<polyline points="622.5,765 706,725"/>
<polyline points="641,832.5 733.75,791"/>
<polyline points="622.5,795 641,832.5 653.75,857.5 661,875 691,861 720,920"/>
<polyline points="622.5,882.5 652.5,946 622.5,963.75"/>
<polyline points="1223,643.75 1238,675 1295.75,801"/>
<polyline points="1238,675 1362.5,626"/>
<polyline points="1064.5,745 1105.75,723.75 1158,696 1194.5,676 1218,683.75 1282,818.75"/>
<polyline points="1158,696 1235.75,858.75"/>
<polyline points="1105.75,723.75 1182,886"/>
<polyline points="1054.5,753.75 1128,913.75"/>
<polyline points="1484,657.5 1385.75,768.75 1343,840 1317,860 1227,910 1157,951 1097,970 1077,982.5"/>
<polyline points="1484,657.5 1499,640"/>
<polyline points="1423,751 1505,832.5"/>
<polyline points="1505,661 1593,747.5 1600,753.75"/>
<polyline points="1561.5,713.75 1600,685"/>
<polyline points="1593,747.5 1505,832.5 1384,900 1272,972.5"/>
<polyline points="1343,840 1382,905"/>
<polyline points="1228,910 1334.5,857.5 1364.5,908.75 1265.75,966 1228,910"/>
<polyline points="1265.75,966 1272,982.5"/>
<polyline points="1539,826 1498,861 1559,982.5"/>
<polyline points="1588,795 1600,810"/>
<polyline points="1484,878.75 1400.75,921 1300,982.5"/>
<polyline points="1400.75,921 1432,982.5"/>
<polyline points="1515,946 1520,952.5 1456.5,982.5"/>
<polyline points="1529,920 1539,915"/>
<polyline points="1570,898.75 1599,883.75"/>
<polyline points="1052,888.75 1072,936"/>
<polyline points="1207,957.5 1219.5,951 1264.5,975"/>
<polyline points="1207,957.5 1217,982.5"/>
<polyline points="765,920 795,982.5"/>
<polyline points="1010,960 1052,945"/>
<polyline points="972.5,982.5 1010,960"/>
<polyline points="705,955 720,982.5"/>
<polyline points="670,982.5 707.5,955 737.5,930"/>
<polyline points="1274.5,398.75 1367,350"/>
<polyline points="1280.75,398 1368.5,354"/>
</g>
<g fill="none" stroke="#e6000f" stroke-linejoin="round">
<polyline stroke-width="3.4" points="1600,240 1557.5,285 1505,342.5 1420.25,431.25 1432.75,476.25"/>
<polyline stroke-width="3.4" points="1564,225 1578,237.5"/>
<polyline stroke-width="3.4" points="1581.5,223.75 1600,240"/>
<polyline stroke-width="3.4" points="1327,540 1208,583.75 1223,643.75 1144.5,685 1052,752.5 1000,785 942.5,820 885,852 825,885 765,920 737.5,930 702.5,952.5 630,982.5"/>
</g>
<polygon points="1322,520 1432.75,476.25 1466.5,525 1343,573.75" fill="none" stroke="#f7a21b" stroke-width="2"/>
<g font-family="'DejaVu Sans Condensed','Liberation Sans',sans-serif" font-size="12.4" letter-spacing="-.45" fill="#fff" stroke="#fff" stroke-width="4.2" stroke-linejoin="round" text-anchor="middle" opacity=".93">
<text x="651.75" y="121.9" transform="rotate(-40 651.75 117.5)">186</text>
<text x="751" y="124.4">57</text>
<text x="889" y="149.4">63</text>
<text x="994" y="125.4">70</text>
<text x="665" y="155.4" transform="rotate(65 665 151)">620</text>
<text x="644" y="150.4">5</text>
<text x="735.5" y="184.9">58</text>
<text x="759" y="207.4" transform="rotate(65 759 203)">350</text>
<text x="714" y="216.9" transform="rotate(75 714 212.5)">194</text>
<text x="666" y="228.4">194</text>
<text x="1014" y="186.9">71</text>
<text x="914" y="214.4">64</text>
<text x="797" y="248.9">19</text>
<text x="1037.5" y="251.9">72</text>
<text x="938" y="276.9">111</text>
<text x="725" y="283.4">18</text>
<text x="679" y="299.9">18</text>
<text x="793" y="311.9">59</text>
<text x="825" y="320.4" transform="rotate(65 825 316)">349</text>
<text x="1036" y="315.4">73</text>
<text x="925.5" y="342.4">65</text>
<text x="958" y="351.9" transform="rotate(10 958 347.5)">598</text>
<text x="690" y="356.9" transform="rotate(80 690 352.5)">51</text>
<text x="742.5" y="355.4">51</text>
<text x="854" y="104.9">176</text>
<text x="1095" y="109.4">10</text>
<text x="1128" y="151.15">11</text>
<text x="1211" y="136.15">14</text>
<text x="1244" y="142.4" transform="rotate(70 1244 138)">339</text>
<text x="1350.75" y="121.9">90</text>
<text x="1346" y="112.4">333</text>
<text x="1464.5" y="147.4">96</text>
<text x="1368" y="176.4">175</text>
<text x="1434.5" y="178.15" transform="rotate(70 1434.5 173.75)">621</text>
<text x="1225.75" y="202.4">83</text>
<text x="1268" y="196.15" transform="rotate(-15 1268 191.75)">386</text>
<text x="1152" y="218.15">12</text>
<text x="1458" y="236.15">274</text>
<text x="1277" y="271.15">84</text>
<text x="1377" y="271.15">91</text>
<text x="1174.5" y="282.4">78</text>
<text x="1067.5" y="328.15" transform="rotate(70 1067.5 323.75)">382</text>
<text x="1197" y="342.4">79</text>
<text x="1307" y="343.9">85</text>
<text x="1436" y="366.9">611</text>
<text x="1522" y="276.9">250</text>
<text x="1570" y="324.9">273</text>
<text x="1594" y="126.4">01</text>
<text x="1596" y="197.4">2</text>
<text x="852.5" y="376.4">196</text>
<text x="627.5" y="405.4">43</text>
<text x="745.75" y="421.4">52</text>
<text x="786" y="426.9" transform="rotate(75 786 422.5)">600</text>
<text x="851.75" y="440.15">238</text>
<text x="901.75" y="434.4" transform="rotate(-20 901.75 430)">616</text>
<text x="990.5" y="409.9">66</text>
<text x="667.5" y="469.4" transform="rotate(-15 667.5 465)">354</text>
<text x="627.5" y="479.4">45</text>
<text x="787.5" y="485.4">53</text>
<text x="936" y="488.9" transform="rotate(-15 936 484.5)">300</text>
<text x="905" y="503.15">61</text>
<text x="985" y="483.9">67</text>
<text x="1014.5" y="475.15" transform="rotate(-15 1014.5 470.75)">362</text>
<text x="717" y="528.15" transform="rotate(80 717 523.75)">46</text>
<text x="665.5" y="549.4">46</text>
<text x="784.5" y="549.4">54</text>
<text x="805" y="551.4" transform="rotate(75 805 547)">613</text>
<text x="1040" y="543.9">112</text>
<text x="929" y="569.4">239</text>
<text x="730" y="595.15">47</text>
<text x="678.75" y="610.15">47</text>
<text x="850.5" y="623.15">55</text>
<text x="1049" y="605.4">242</text>
<text x="1055" y="379.9">343</text>
<text x="1082" y="378.9">74</text>
<text x="1223.75" y="419.9">80</text>
<text x="1336" y="411.4">86</text>
<text x="1070" y="448.4">75</text>
<text x="1100.75" y="454.4" transform="rotate(-10 1100.75 450)">608</text>
<text x="1364.5" y="475.15">301</text>
<text x="1122.75" y="520.15">177</text>
<text x="1254.5" y="515.4">276</text>
<text x="1155.75" y="610.4">615</text>
<text x="1284.5" y="611.4">258</text>
<text x="1410" y="600.4">285</text>
<text x="1483.5" y="418.4">265</text>
<text x="1528" y="474.4">267</text>
<text x="1585" y="647.4">248</text>
<text x="691" y="666.9" transform="rotate(75 691 662.5)">48</text>
<text x="745" y="664.4">48</text>
<text x="949.5" y="671.15">247</text>
<text x="644" y="723.9">41</text>
<text x="750" y="731.9">49</text>
<text x="901" y="733.9">240</text>
<text x="712" y="776.9" transform="rotate(75 712 772.5)">189</text>
<text x="660.75" y="788.9">189</text>
<text x="830.75" y="784.4">325</text>
<text x="923.75" y="783.15" transform="rotate(70 923.75 778.75)">606</text>
<text x="867" y="808.9" transform="rotate(-20 867 804.5)">348</text>
<text x="672" y="837.4" transform="rotate(-25 672 833)">190</text>
<text x="727" y="853.9">326</text>
<text x="677" y="860.4" transform="rotate(-20 677 856)">326</text>
<text x="775" y="856.9" transform="rotate(-10 775 852.5)">330</text>
<text x="951" y="886.4" transform="rotate(-10 951 882)">634</text>
<text x="1007" y="881.4">225</text>
<text x="948" y="911.4">220</text>
<text x="1080.75" y="688.15">359</text>
<text x="1312.5" y="716.15">253</text>
<text x="1223" y="767.4">338</text>
<text x="1171.5" y="795.4">230</text>
<text x="1118" y="823.9">392</text>
<text x="1064" y="851.4">238</text>
<text x="1427" y="834.9">315</text>
<text x="1510" y="751.15">274</text>
<text x="1527" y="861.9">331</text>
<text x="887" y="944.4">221</text>
<text x="828" y="978.15">223</text>
<text x="1252" y="922.4">203</text>
<text x="1280.75" y="935.15" transform="rotate(-8 1280.75 930.75)">294</text>
<text x="1124" y="943.9">2987/3</text>
<text x="1184.5" y="987.4">358</text>
<text x="1593" y="940.4">329</text>
<text x="623" y="661.4">0</text>
</g>
<g font-family="'DejaVu Sans Condensed','Liberation Sans',sans-serif" font-size="12.4" letter-spacing="-.45" fill="#b40d1b" stroke="#b40d1b" stroke-width=".4" text-anchor="middle">
<text x="651.75" y="121.9" transform="rotate(-40 651.75 117.5)">186</text>
<text x="751" y="124.4">57</text>
<text x="889" y="149.4">63</text>
<text x="994" y="125.4">70</text>
<text x="665" y="155.4" transform="rotate(65 665 151)">620</text>
<text x="644" y="150.4">5</text>
<text x="735.5" y="184.9">58</text>
<text x="759" y="207.4" transform="rotate(65 759 203)">350</text>
<text x="714" y="216.9" transform="rotate(75 714 212.5)">194</text>
<text x="666" y="228.4">194</text>
<text x="1014" y="186.9">71</text>
<text x="914" y="214.4">64</text>
<text x="797" y="248.9">19</text>
<text x="1037.5" y="251.9">72</text>
<text x="938" y="276.9">111</text>
<text x="725" y="283.4">18</text>
<text x="679" y="299.9">18</text>
<text x="793" y="311.9">59</text>
<text x="825" y="320.4" transform="rotate(65 825 316)">349</text>
<text x="1036" y="315.4">73</text>
<text x="925.5" y="342.4">65</text>
<text x="958" y="351.9" transform="rotate(10 958 347.5)">598</text>
<text x="690" y="356.9" transform="rotate(80 690 352.5)">51</text>
<text x="742.5" y="355.4">51</text>
<text x="854" y="104.9">176</text>
<text x="1095" y="109.4">10</text>
<text x="1128" y="151.15">11</text>
<text x="1211" y="136.15">14</text>
<text x="1244" y="142.4" transform="rotate(70 1244 138)">339</text>
<text x="1350.75" y="121.9">90</text>
<text x="1346" y="112.4">333</text>
<text x="1464.5" y="147.4">96</text>
<text x="1368" y="176.4">175</text>
<text x="1434.5" y="178.15" transform="rotate(70 1434.5 173.75)">621</text>
<text x="1225.75" y="202.4">83</text>
<text x="1268" y="196.15" transform="rotate(-15 1268 191.75)">386</text>
<text x="1152" y="218.15">12</text>
<text x="1458" y="236.15">274</text>
<text x="1277" y="271.15">84</text>
<text x="1377" y="271.15">91</text>
<text x="1174.5" y="282.4">78</text>
<text x="1067.5" y="328.15" transform="rotate(70 1067.5 323.75)">382</text>
<text x="1197" y="342.4">79</text>
<text x="1307" y="343.9">85</text>
<text x="1436" y="366.9">611</text>
<text x="1522" y="276.9">250</text>
<text x="1570" y="324.9">273</text>
<text x="1594" y="126.4">01</text>
<text x="1596" y="197.4">2</text>
<text x="852.5" y="376.4">196</text>
<text x="627.5" y="405.4">43</text>
<text x="745.75" y="421.4">52</text>
<text x="786" y="426.9" transform="rotate(75 786 422.5)">600</text>
<text x="851.75" y="440.15" opacity="0.6">238</text>
<text x="901.75" y="434.4" transform="rotate(-20 901.75 430)">616</text>
<text x="990.5" y="409.9" opacity="0.6">66</text>
<text x="667.5" y="469.4" transform="rotate(-15 667.5 465)">354</text>
<text x="627.5" y="479.4">45</text>
<text x="787.5" y="485.4">53</text>
<text x="936" y="488.9" transform="rotate(-15 936 484.5)">300</text>
<text x="905" y="503.15">61</text>
<text x="985" y="483.9">67</text>
<text x="1014.5" y="475.15" transform="rotate(-15 1014.5 470.75)">362</text>
<text x="717" y="528.15" transform="rotate(80 717 523.75)">46</text>
<text x="665.5" y="549.4">46</text>
<text x="784.5" y="549.4">54</text>
<text x="805" y="551.4" transform="rotate(75 805 547)">613</text>
<text x="1040" y="543.9">112</text>
<text x="929" y="569.4">239</text>
<text x="730" y="595.15">47</text>
<text x="678.75" y="610.15" opacity="0.6">47</text>
<text x="850.5" y="623.15">55</text>
<text x="1049" y="605.4">242</text>
<text x="1055" y="379.9">343</text>
<text x="1082" y="378.9">74</text>
<text x="1223.75" y="419.9">80</text>
<text x="1336" y="411.4">86</text>
<text x="1070" y="448.4">75</text>
<text x="1100.75" y="454.4" transform="rotate(-10 1100.75 450)">608</text>
<text x="1364.5" y="475.15">301</text>
<text x="1122.75" y="520.15">177</text>
<text x="1254.5" y="515.4">276</text>
<text x="1155.75" y="610.4">615</text>
<text x="1284.5" y="611.4">258</text>
<text x="1410" y="600.4">285</text>
<text x="1483.5" y="418.4">265</text>
<text x="1528" y="474.4">267</text>
<text x="1585" y="647.4">248</text>
<text x="691" y="666.9" transform="rotate(75 691 662.5)">48</text>
<text x="745" y="664.4">48</text>
<text x="949.5" y="671.15">247</text>
<text x="644" y="723.9">41</text>
<text x="750" y="731.9">49</text>
<text x="901" y="733.9">240</text>
<text x="712" y="776.9" transform="rotate(75 712 772.5)">189</text>
<text x="660.75" y="788.9">189</text>
<text x="830.75" y="784.4">325</text>
<text x="923.75" y="783.15" transform="rotate(70 923.75 778.75)">606</text>
<text x="867" y="808.9" transform="rotate(-20 867 804.5)">348</text>
<text x="672" y="837.4" transform="rotate(-25 672 833)">190</text>
<text x="727" y="853.9">326</text>
<text x="677" y="860.4" transform="rotate(-20 677 856)">326</text>
<text x="775" y="856.9" transform="rotate(-10 775 852.5)">330</text>
<text x="951" y="886.4" transform="rotate(-10 951 882)">634</text>
<text x="1007" y="881.4">225</text>
<text x="948" y="911.4">220</text>
<text x="1080.75" y="688.15">359</text>
<text x="1312.5" y="716.15">253</text>
<text x="1223" y="767.4">338</text>
<text x="1171.5" y="795.4">230</text>
<text x="1118" y="823.9">392</text>
<text x="1064" y="851.4">238</text>
<text x="1427" y="834.9">315</text>
<text x="1510" y="751.15">274</text>
<text x="1527" y="861.9">331</text>
<text x="887" y="944.4">221</text>
<text x="828" y="978.15">223</text>
<text x="1252" y="922.4">203</text>
<text x="1280.75" y="935.15" transform="rotate(-8 1280.75 930.75)">294</text>
<text x="1124" y="943.9">2987/3</text>
<text x="1184.5" y="987.4">358</text>
<text x="1593" y="940.4">329</text>
<text x="623" y="661.4">0</text>
<text x="1389.5" y="529.2" fill="#ee9a1a" stroke="#ee9a1a">263</text>
</g>
</svg>
<!-- map ui -->
<div class="abs mbtn" style="left:1539.500px;top:115px;width:48.500px;height:48px"></div>
<div class="abs mbtn" style="left:1539.500px;top:175px;width:48.500px;height:48px"></div>
<div class="abs mbtn" style="left:1539.500px;top:237px;width:48.500px;height:48px"></div>
<div class="abs mbtn" style="left:1539.500px;top:763.500px;width:48.500px;height:124px"></div>
<div class="abs" style="left:1539.500px;top:812px;width:48.500px;height:1px;background:#e3e8f1"></div>
<div class="abs" style="left:1539.500px;top:839.500px;width:48.500px;height:1px;background:#e3e8f1"></div>
<div class="abs mbtn" style="left:1539.500px;top:900px;width:48.500px;height:48px"></div>
<svg class="abs" style="left:1539.500px;top:115px" width="49" height="172" viewBox="0 0 49 172" fill="none" stroke="#111" stroke-width="2.400" stroke-linejoin="round" stroke-linecap="round"><path d="M24.500 15.500l9 5.500-9 5.500-9-5.500z"/><path d="M16.800 25.600l-1.300.9 9 5.500 9-5.500-1.300-.9"/><g transform="translate(24.500 84) rotate(-40)"><rect x="-10.500" y="-3.600" width="21" height="7.200"/><path d="M-3.500 -3.600v3M0 -3.600v3M3.500 -3.600v3" stroke-width="1.300"/></g><circle cx="24.500" cy="146.500" r="4.700"/><circle cx="24.500" cy="146.500" r="1.300" fill="#111" stroke="none"/><path d="M24.500 137.500v4.300M24.500 151.200v4.300M15.500 146.500h4.300M29.200 146.500h4.300"/></svg>
<svg class="abs" style="left:1539.500px;top:763.500px" width="49" height="186" viewBox="0 0 49 186" fill="none" stroke="#111" stroke-width="2.300"><path d="M24.500 15.500v18M15.500 24.500h18"/><circle cx="18.300" cy="62" r="2" fill="#111" stroke="none"/><circle cx="24.500" cy="62" r="2" fill="#111" stroke="none"/><circle cx="30.700" cy="62" r="2" fill="#111" stroke="none"/><path d="M15.500 100h18"/><circle cx="24.500" cy="160.500" r="12" stroke-width="2"/><path d="M24.500 151.500l3.300 9-3.300 9-3.300-9z" fill="#111" stroke="none"/><circle cx="24.500" cy="160.500" r="1.300" fill="#fff" stroke="none"/></svg>
<!-- minimap -->
<div class="abs" style="left:1439px;top:871px;width:76.500px;height:76.500px;border-radius:3px;overflow:hidden;box-shadow:0 1px 5px rgba(0,0,0,.4);background:#6c7a57">
<svg width="77" height="77" viewBox="0 0 77 77"><rect width="77" height="77" fill="#6d7955"/><path d="M0 0h40l-4 5-8 1-5 5-7-2-4 5-6-1-6 6z" fill="#274d78"/><path d="M44 0h33v4l-10 3-8-3-6 4z" fill="#3a5c7c" opacity=".8"/><path d="M8 8l8-5 6 4-5 7-7 1z" fill="#63744f"/><path d="M0 28l6 3 3 8-5 4-4-2z" fill="#2a4f79" opacity=".85"/><path d="M0 62l8 2 9-3 8 6 9-1 3 5-4 6H0z" fill="#234873"/><path d="M34 70l8-5 6 3-1 9H33z" fill="#2b5585" opacity=".9"/><path d="M18 26l22-10 26 6 9 20-12 20-26 4-18-14z" fill="#7b8560" opacity=".75"/><path d="M36 44l20-8 12 12-14 14-14-2z" fill="#87876a" opacity=".6"/><path d="M20 36l10-6 8 8-8 10z" fill="#5f7050" opacity=".6"/><circle cx="47" cy="68" r="3" fill="#d9d5c5" opacity=".8"/></svg></div>
<!-- attribution -->
<div class="abs" style="left:650px;top:956.500px;font-size:14.540px;line-height:18px;color:#161616;white-space:nowrap;text-shadow:0 0 1.500px rgba(255,255,255,.9),0 0 2px rgba(255,255,255,.7)">ПКК © Росреестр 2010-2022 I ЕЭКО © Росреестр 2019-2022 I © Участники OpenStreetMap I Esri, Intermap, NASA, NGA, USGS</div>
<svg class="abs" style="left:1516px;top:958px" width="74" height="16" viewBox="0 0 74 16" fill="#111"><path d="M9 2.500L3 8h1.700v5.500h3V10h2.600v3.500h3V8H15z"/><path d="M36 1.500l1.600 4.900 4.900 1.600-4.900 1.600L36 14.500l-1.600-4.900L29.500 8l4.900-1.600z"/><circle cx="36" cy="8" r="1.500" fill="#f5f3f2"/><rect x="56" y="3" width="13" height="10.500" rx="1"/><rect x="59.500" y="7.500" width="8" height="4.500" fill="#f5f3f2"/></svg>
<div class="abs" style="left:83px;top:103px;width:559px;height:82px;background:#0068bc"></div>
<div class="abs" style="left:97px;top:115px;width:514px;height:57px;background:#fff;border-radius:2px"></div>
<svg class="abs" style="left:117px;top:136px" width="18" height="16" viewBox="0 0 18 16" stroke="#dfe2e8" stroke-width="1.500"><path d="M0 1.500h18M0 8h18M0 14.500h18"/></svg>
<div class="abs" style="left:161.5px;top:132.2px;font-size:19.6px;line-height:22.5px;color:#161616;white-space:nowrap;">Участки</div>
<svg class="abs" style="left:258px;top:139px" width="14" height="10" viewBox="0 0 14 10" fill="none" stroke="#c3c7ce" stroke-width="1.500"><path d="M1.500 1.500L7 7.500l5.500-6"/></svg>
<div class="abs" style="left:286.5px;top:132.4px;font-size:19.3px;line-height:22.2px;color:#161616;white-space:nowrap;">39:03:080804:263</div>
<svg class="abs" style="left:544px;top:137px" width="14" height="14" viewBox="0 0 14 14" fill="none" stroke="#c3c7ce" stroke-width="1.500"><path d="M1 1l12 12M13 1L1 13"/></svg>
<svg class="abs" style="left:568px;top:132px" width="24" height="24" viewBox="0 0 24 24" fill="none" stroke="#0a6bc0" stroke-width="2.600" stroke-linecap="round"><circle cx="9.500" cy="9.500" r="6.500"/><path d="M14.500 14.500l6 6"/></svg>
<div class="abs" style="left:83px;top:185px;width:540px;height:798px;background:#fff;box-shadow:1px 0 5px rgba(0,0,0,.22)"></div>
<div class="abs" style="left:83px;top:360.7px;width:524px;height:40.3px;background:#f7f8fa"></div>
<div class="abs" style="left:83px;top:442px;width:524px;height:41.0px;background:#f7f8fa"></div>
<div class="abs" style="left:83px;top:524px;width:524px;height:127.0px;background:#f7f8fa"></div>
<div class="abs" style="left:83px;top:692px;width:524px;height:40.6px;background:#f7f8fa"></div>
<div class="abs" style="left:83px;top:795.5px;width:524px;height:53.5px;background:#f7f8fa"></div>
<div class="abs" style="left:83px;top:890px;width:524px;height:53.7px;background:#f7f8fa"></div>
<div class="abs" style="left:83px;top:315px;width:540px;height:1px;background:#eceef2"></div>
<div class="abs" style="left:352px;top:316px;width:271px;height:44.7px;background:#eceff4"></div>
<div class="abs" style="left:83px;top:316px;width:269px;height:44px;font-size:19.1px;font-weight:bold;color:#111;line-height:43px;text-align:center">Информация</div>
<div class="abs" style="left:352px;top:316px;width:270px;height:44px;font-size:19.1px;font-weight:bold;color:#9299a3;line-height:43px;text-align:center">Услуги</div>
<div class="abs" style="left:107px;top:192.9px;font-size:19.3px;line-height:22.2px;color:#111;white-space:nowrap;font-weight:bold;">Земельный участок 39:03:080804:263</div>
<div class="abs" style="left:107px;top:221.9px;font-size:14.8px;line-height:17.0px;color:#a3a7ae;white-space:nowrap;">Российская Федерация, Калининградская область, Гурьевский район,</div>
<div class="abs" style="left:107px;top:237.2px;font-size:14.7px;line-height:16.9px;color:#a3a7ae;white-space:nowrap;">СНТ «Ветерок-2», улица Клубничная, № 124</div>
<div class="abs" style="left:107px;top:260.8px;font-size:17.2px;line-height:19.8px;color:#1a1a1a;white-space:nowrap;">для ведения садоводства</div>
<div class="abs" style="left:107px;top:286.0px;font-size:17.4px;line-height:20.0px;color:#0a6bc0;white-space:nowrap;">План ЗУ</div>
<div class="abs" style="left:212px;top:286.0px;font-size:17.4px;line-height:20.0px;color:#0a6bc0;white-space:nowrap;">План КК</div>
<div class="abs" style="left:318px;top:286.0px;font-size:17.4px;line-height:20.0px;color:#0a6bc0;white-space:nowrap;">Создать участок ЖС</div>
<svg class="abs" style="left:175px;top:288px" width="330" height="16" viewBox="0 0 330 16" fill="none" stroke="#0a6bc0" stroke-width="1.2"><path d="M2 8h13M10 3.5l5 4.500-5 4.500"/><path d="M108 8h13M116 3.5l5 4.500-5 4.500"/><path d="M312 8h13M320 3.5l5 4.500-5 4.500"/></svg>
<svg class="abs" style="left:547px;top:286px" width="54" height="22" viewBox="0 0 54 22" fill="none" stroke="#9aa0aa" stroke-width="1.6"><path d="M7 15H2V2h14v5"/><circle cx="13" cy="12" r="4"/><path d="M16 15l4 4"/><path d="M43 2l2.6 5.600 6 .7-4.500 4.100 1.300 6-5.400-3.100-5.400 3.100 1.300-6L34.400 8.300l6-.7z"/></svg>
<div class="abs" style="left:107px;top:372.6px;font-size:14.6px;line-height:16.8px;color:#6c6f73;white-space:nowrap;">Тип:</div>
<div class="abs" style="left:282px;top:369.9px;font-size:19.2px;line-height:22.1px;color:#1a1a1a;white-space:nowrap;letter-spacing:.33px;">Объект недвижимости</div>
<div class="abs" style="left:107px;top:413.6px;font-size:14.6px;line-height:16.8px;color:#6c6f73;white-space:nowrap;">Вид:</div>
<div class="abs" style="left:282px;top:410.9px;font-size:19.2px;line-height:22.1px;color:#1a1a1a;white-space:nowrap;letter-spacing:.33px;">Земельный участок</div>
<div class="abs" style="left:107px;top:454.6px;font-size:14.6px;line-height:16.8px;color:#6c6f73;white-space:nowrap;">Кадастровый номер:</div>
<div class="abs" style="left:282px;top:453.4px;font-size:16.8px;line-height:19.3px;color:#0a6bc0;white-space:nowrap;">39:03:080804:263</div>
<div class="abs" style="left:107px;top:495.6px;font-size:14.6px;line-height:16.8px;color:#6c6f73;white-space:nowrap;">Кадастровый квартал:</div>
<div class="abs" style="left:282px;top:494.4px;font-size:16.8px;line-height:19.3px;color:#0a6bc0;white-space:nowrap;">39:03:080804</div>
<div class="abs" style="left:107px;top:536.6px;font-size:14.6px;line-height:16.8px;color:#6c6f73;white-space:nowrap;">Адрес:</div>
<div class="abs" style="left:282px;top:533.0px;font-size:19.2px;line-height:22.1px;color:#1a1a1a;white-space:nowrap;letter-spacing:.33px;">Российская Федерация,</div>
<div class="abs" style="left:282px;top:554.7px;font-size:19.2px;line-height:22.1px;color:#1a1a1a;white-space:nowrap;letter-spacing:.33px;">Калининградская область,</div>
<div class="abs" style="left:282px;top:576.4px;font-size:19.2px;line-height:22.1px;color:#1a1a1a;white-space:nowrap;letter-spacing:.33px;">Гурьевский район, СНТ</div>
<div class="abs" style="left:282px;top:598.1px;font-size:19.2px;line-height:22.1px;color:#1a1a1a;white-space:nowrap;letter-spacing:.1px;">«Ветерок-2», улица Клубничная, №</div>
<div class="abs" style="left:282px;top:619.8px;font-size:19.1px;line-height:22.0px;color:#1a1a1a;white-space:nowrap;">124</div>
<div class="abs" style="left:107px;top:663.6px;font-size:14.6px;line-height:16.8px;color:#6c6f73;white-space:nowrap;">Площадь уточненная:</div>
<div class="abs" style="left:282px;top:661.0px;font-size:19.2px;line-height:22.1px;color:#1a1a1a;white-space:nowrap;letter-spacing:.33px;">600 кв. м</div>
<div class="abs" style="left:107px;top:704.1px;font-size:14.6px;line-height:16.8px;color:#6c6f73;white-space:nowrap;">Статус:</div>
<div class="abs" style="left:282px;top:701.5px;font-size:19.2px;line-height:22.1px;color:#1a1a1a;white-space:nowrap;letter-spacing:.33px;">Учтенный</div>
<div class="abs" style="left:107px;top:745.1px;font-size:14.6px;line-height:16.8px;color:#6c6f73;white-space:nowrap;">Категория земель:</div>
<div class="abs" style="left:282px;top:742.0px;font-size:19.2px;line-height:22.1px;color:#1a1a1a;white-space:nowrap;letter-spacing:.33px;">Земли сельскохозяйственного</div>
<div class="abs" style="left:282px;top:763.7px;font-size:19.2px;line-height:22.1px;color:#1a1a1a;white-space:nowrap;letter-spacing:.33px;">назначения</div>
<div class="abs" style="left:107px;top:807.1px;font-size:14.6px;line-height:16.8px;color:#6c6f73;white-space:nowrap;">Разрешенное</div>
<div class="abs" style="left:107px;top:823.1px;font-size:14.6px;line-height:16.8px;color:#6c6f73;white-space:nowrap;">использование:</div>
<div class="abs" style="left:282px;top:810.5px;font-size:19.2px;line-height:22.1px;color:#1a1a1a;white-space:nowrap;letter-spacing:.33px;">для ведения садоводства</div>
<div class="abs" style="left:107px;top:861.1px;font-size:14.6px;line-height:16.8px;color:#6c6f73;white-space:nowrap;">Форма собственности:</div>
<div class="abs" style="left:282px;top:858.0px;font-size:19.2px;line-height:22.1px;color:#1a1a1a;white-space:nowrap;letter-spacing:.33px;">-</div>
<div class="abs" style="left:107px;top:902.1px;font-size:14.6px;line-height:16.8px;color:#6c6f73;white-space:nowrap;">Кадастровая</div>
<div class="abs" style="left:107px;top:918.1px;font-size:14.6px;line-height:16.8px;color:#6c6f73;white-space:nowrap;">стоимость:</div>
<div class="abs" style="left:282px;top:905.0px;font-size:19.1px;line-height:22.0px;color:#1a1a1a;white-space:nowrap;">62 988 руб.</div>
<div class="abs" style="left:107px;top:956.1px;font-size:14.6px;line-height:16.8px;color:#6c6f73;white-space:nowrap;">дата определения:</div>
<div class="abs" style="left:282px;top:953.0px;font-size:19.1px;line-height:22.0px;color:#1a1a1a;white-space:nowrap;">01.01.2020</div>
<div class="abs" style="left:608px;top:361px;width:6px;height:510px;background:#eef0f4;border-radius:3px"></div>
<!-- collapse chevron -->
<svg class="abs" style="left:626.500px;top:136.500px" width="12" height="16" viewBox="0 0 12 16" fill="none" stroke="#82b4e2" stroke-width="2.200"><path d="M9.500 1.500L3 8l6.500 6.500"/></svg>
</div></div>
<!-- ===== dock ===== -->
<div class="abs" style="left:128.500px;top:984px;width:1471px;height:110px;background:linear-gradient(180deg,#151729 0,#181a2f 40%,#1a1c33 100%);border:1px solid #2f3246;border-radius:7px 7px 0 0"></div>
<svg class="abs" style="left:130px;top:986px" width="1468" height="94" viewBox="130 986 1468 94" font-family="'Liberation Sans',sans-serif">
<defs>
<linearGradient id="gFb" x1="0" y1="0" x2="0" y2="1"><stop offset="0" stop-color="#2bc0fd"/><stop offset="1" stop-color="#0d63e2"/></linearGradient>
<linearGradient id="gFw" x1="0" y1="0" x2="0" y2="1"><stop offset="0" stop-color="#f4f6f9"/><stop offset="1" stop-color="#d6dbe3"/></linearGradient>
<radialGradient id="gSiri" cx=".5" cy=".5" r=".5"><stop offset="0" stop-color="#23233a"/><stop offset=".8" stop-color="#15152a"/><stop offset="1" stop-color="#0c0c1a"/></radialGradient>
<linearGradient id="gLp" x1="0" y1="0" x2="0" y2="1"><stop offset="0" stop-color="#c5cacd"/><stop offset="1" stop-color="#7d8387"/></linearGradient>
<linearGradient id="gSaf" x1="0" y1="0" x2="0" y2="1"><stop offset="0" stop-color="#1fc0f6"/><stop offset="1" stop-color="#1e5fe8"/></linearGradient>
<linearGradient id="gWa" x1="0" y1="0" x2="0" y2="1"><stop offset="0" stop-color="#62f97c"/><stop offset="1" stop-color="#09bd3e"/></linearGradient>
<linearGradient id="gTg" x1="0" y1="0" x2="0" y2="1"><stop offset="0" stop-color="#35aee2"/><stop offset="1" stop-color="#1c93d2"/></linearGradient>
<linearGradient id="gSp" x1="0" y1="0" x2="0" y2="1"><stop offset="0" stop-color="#a4abb1"/><stop offset="1" stop-color="#6e747a"/></linearGradient>
<linearGradient id="gIt" x1="0" y1="0" x2="1" y2="1"><stop offset="0" stop-color="#fb5c74"/><stop offset=".5" stop-color="#c643e8"/><stop offset="1" stop-color="#2fb6f5"/></linearGradient>
<linearGradient id="gNote" x1="0" y1="0" x2="0" y2="1"><stop offset="0" stop-color="#fb4e6e"/><stop offset=".55" stop-color="#b44de6"/><stop offset="1" stop-color="#2fb1f6"/></linearGradient>
<linearGradient id="gTr" x1="0" y1="0" x2="1" y2="0"><stop offset="0" stop-color="#4a4d52"/><stop offset=".5" stop-color="#7b7f85"/><stop offset="1" stop-color="#3d4045"/></linearGradient>
</defs>
<!-- finder -->
<g><rect x="142.500" y="1000" width="62.500" height="59.500" rx="3" fill="url(#gFw)"/><path d="M145.500 1000h31c-4 9-7 19-7.500 31h7c0 10 1 20 3 28.500h-33.500a3 3 0 0 1-3-3v-53.500a3 3 0 0 1 3-3z" fill="url(#gFb)"/><path d="M158 1017v6M190 1017v6" stroke="#1d2a3a" stroke-width="2.200" stroke-linecap="round"/><path d="M154 1040c10 8 28 8 39 0" fill="none" stroke="#1d2a3a" stroke-width="2.200" stroke-linecap="round"/><path d="M176.500 1000c-4 9-7 19-7.500 31h7c0 10 1 20 3 28.500" fill="none" stroke="#1d2a3a" stroke-width="1.600"/></g>
<!-- siri -->
<g><circle cx="255.500" cy="1029.500" r="33" fill="#e9e9f2"/><circle cx="255.500" cy="1029.500" r="30.500" fill="url(#gSiri)"/><path d="M230 1040c12-4 18-14 24-20 8-8 16-10 26-8-10 2-16 8-22 16-7 9-15 14-28 12z" fill="#2ee6e0" opacity=".85"/><path d="M236 1012c10 2 16 10 22 18 6 8 12 14 20 14-10 4-18-2-25-11-6-8-10-16-17-21z" fill="#e13ab4" opacity=".85"/><path d="M240 1046c8-10 14-18 18-30 2 12 0 24-6 34z" fill="#3a6df0" opacity=".7"/><path d="M262 1006c4 6 8 10 16 12-8 2-14 0-18-4z" fill="#ff3d7f" opacity=".8"/><path d="M264 1036c6 0 12 2 16 6-6 2-12 0-16-6z" fill="#36e3a0" opacity=".8"/><circle cx="256" cy="1028" r="5" fill="#fff" opacity=".8"/></g>
<!-- launchpad -->
<g><circle cx="337.500" cy="1029.500" r="33" fill="url(#gLp)"/><circle cx="337.500" cy="1029.500" r="31" fill="none" stroke="#d9dddf" stroke-width="1.500" opacity=".7"/><path d="M355 1008c-12 1-22 8-29 20l-8 2-4 6 8 1 5 5 1 8 6-4 2-8c12-7 19-17 19-30z" fill="#3a3f44"/><circle cx="344" cy="1021" r="3.600" fill="#aeb3b7"/><path d="M322 1042l-6 9 9-5z" fill="#3a3f44"/></g>
<!-- safari -->
<g><circle cx="418.750" cy="1029.500" r="33" fill="#eceef2"/><circle cx="418.750" cy="1029.500" r="29.500" fill="url(#gSaf)"/><circle cx="418.750" cy="1029.500" r="26" fill="none" stroke="#fff" stroke-width="4" stroke-dasharray="1 2.400" opacity=".85"/><path d="M440 1008l-17 25-8-7z" fill="#f3303a"/><path d="M397.500 1051l17-25 8 7z" fill="#f2f2f2"/></g>
<!-- chrome -->
<g><rect x="469.500" y="998" width="62" height="62.500" rx="14" fill="#f3f3f3"/><circle cx="500.500" cy="1029" r="27" fill="#fbc116"/><path d="M500.500 1029L477.100 1015.500A27 27 0 0 1 523.900 1015.500z" fill="#ea4335"/><path d="M500.500 1002a27 27 0 0 1 23.400 13.500H500.500z" fill="#ea4335"/><path d="M477.100 1015.500A27 27 0 0 0 500.500 1056l11.700-20.200-11.700-6.800z" fill="#34a853"/><path d="M477.100 1015.500l11.700 20.300 11.700-6.800z" fill="#34a853"/><path d="M488.800 1035.800L500.500 1056l-1 0z" fill="#34a853"/><path d="M500.500 1056l11.700-20.200H488.800z" fill="#34a853" opacity="0"/><circle cx="500.500" cy="1029" r="12.500" fill="#fff"/><circle cx="500.500" cy="1029" r="10" fill="#4285f4"/></g>
<!-- calculator -->
<g transform="rotate(-7 582 1029)"><rect x="554" y="996" width="57" height="65" rx="4" fill="#a3a4a5"/><rect x="554" y="996" width="57" height="17" rx="3" fill="#2b3b37"/><text x="606" y="1009" font-size="9" fill="#8fa39b" text-anchor="end">3.141593</text><rect x="596" y="1013" width="15" height="44" fill="#f5820b"/><g fill="#c2c3c4"><rect x="557" y="1016" width="11" height="8"/><rect x="570" y="1016" width="11" height="8"/><rect x="583" y="1016" width="11" height="8"/><rect x="557" y="1026" width="11" height="8"/><rect x="570" y="1026" width="11" height="8"/><rect x="583" y="1026" width="11" height="8"/><rect x="557" y="1036" width="11" height="8"/><rect x="570" y="1036" width="11" height="8"/><rect x="583" y="1036" width="11" height="8"/><rect x="557" y="1046" width="11" height="8"/><rect x="570" y="1046" width="11" height="8"/><rect x="583" y="1046" width="11" height="8"/></g></g>
<!-- calendar -->
<g transform="rotate(-4 662 1029)"><rect x="633" y="1000" width="60" height="60" rx="3" fill="#5d6a73"/><rect x="634" y="997" width="56" height="59" rx="3" fill="#fbfbfb"/><path d="M634 1000a3 3 0 0 1 3-3h50a3 3 0 0 1 3 3v13h-56z" fill="#f2383f"/><text x="662" y="1010.500" font-size="12.500" fill="#fff" text-anchor="middle">МАЙ</text><text x="662" y="1049" font-size="37" fill="#1c1c1c" text-anchor="middle" letter-spacing="-1.500">12</text></g>
<!-- system preferences -->
<g><rect x="711" y="998.500" width="67" height="62" rx="3" fill="url(#gSp)"/><circle cx="744.500" cy="1029.500" r="25" fill="none" stroke="#3c4045" stroke-width="6" stroke-dasharray="3.600 2.950"/><circle cx="744.500" cy="1029.500" r="20.500" fill="#42464b"/><circle cx="744.500" cy="1029.500" r="17" fill="#8a9096"/><g stroke="#33373b" stroke-width="4.500" stroke-linecap="round"><path d="M744.500 1029.500V1013"/><path d="M744.500 1029.500l14.300 8.200"/><path d="M744.500 1029.500l-14.300 8.200"/></g><circle cx="744.500" cy="1029.500" r="3.300" fill="#7d8388"/><circle cx="770.750" cy="1006" r="14" fill="#f5031d"/><text x="770.750" y="1011.500" font-size="15.500" font-weight="bold" fill="#fff" text-anchor="middle">1</text></g>
<!-- whatsapp -->
<g><rect x="796" y="998.500" width="62" height="62" rx="14" fill="url(#gWa)"/><path d="M827 1006.500a22 22 0 0 0-19 33l-3.200 11.500 11.800-3.100a22 22 0 1 0 10.400-41.400z" fill="#fff"/><circle cx="827" cy="1028.500" r="18" fill="#25d04f"/><path d="M819.500 1018.500c-1.500 1-2.600 2.800-2.400 4.800.6 4.600 3.400 8.800 7.200 11.800 2.600 2 5.600 3.600 8.800 3.800 2 .1 3.800-1.200 4.600-2.800.4-.8.300-1.600-.4-2.100l-4-2.300c-.7-.4-1.500-.2-2 .4l-1.300 1.700c-3-1.300-5.400-3.700-6.800-6.700l1.500-1.400c.6-.5.700-1.300.3-2l-2.500-4.300c-.6-1-1.900-1.500-3-.9z" fill="#fff"/></g>
<!-- viber -->
<g><rect x="877.500" y="998.500" width="62" height="62" rx="14" fill="#7f4ff0"/><path d="M908.500 1007c-10 0-19 2.500-19 17 0 9 3 14 9 16v7.500l7-7c1 .1 2 .1 3 .1 10 0 19-2.500 19-16.600s-9-17-19-17z" fill="none" stroke="#fff" stroke-width="3.200" stroke-linejoin="round"/><path d="M901.500 1015.500c-1.200.8-2 2.200-1.800 3.800.5 3.800 2.800 7.200 5.900 9.600 2.100 1.600 4.600 2.900 7.200 3.100 1.600.1 3.100-1 3.800-2.300.3-.6.200-1.300-.3-1.700l-3.300-1.900c-.6-.3-1.200-.2-1.600.3l-1.100 1.400c-2.500-1.100-4.400-3-5.600-5.500l1.200-1.100c.5-.4.600-1.100.2-1.600l-2-3.500c-.5-.9-1.600-1.200-2.600-.6z" fill="#fff"/><path d="M909.500 1014.500c4 .3 7 3.300 7.300 7.300M909.800 1018c2 .2 3.600 1.800 3.800 3.800" fill="none" stroke="#fff" stroke-width="1.600" stroke-linecap="round"/></g>
<!-- telegram -->
<g><circle cx="990" cy="1029" r="34" fill="url(#gTg)"/><path d="M968.500 1028.500l36-14.500c1.800-.7 3.300.4 2.700 3l-6.100 28.800c-.4 2-1.700 2.500-3.400 1.600l-9.300-6.900-4.500 4.400c-.5.500-.9.900-1.900.9l.7-9.500 17.300-15.600c.8-.7-.2-1-1.100-.4l-21.400 13.500-9.200-2.900c-2-.6-2-2 .2-2.400z" fill="#fff"/><rect x="996" y="992" width="34.500" height="27.500" rx="13.750" fill="#f5031d"/><text x="1013.250" y="1011.500" font-size="16.500" font-weight="bold" fill="#fff" text-anchor="middle">473</text></g>
<!-- word -->
<g><rect x="1072" y="1003" width="34" height="53" rx="1.500" fill="#fdfdfd"/><g stroke="#20242b" stroke-width="2.300"><path d="M1078 1011h24M1078 1018.500h24M1078 1026h24M1078 1033.500h24M1078 1041h24M1078 1048.500h24"/></g><g stroke="#3f7fd6" stroke-width="2.300"><path d="M1084 1011h10M1090 1018.500h10M1082 1033.500h12M1088 1048.500h12"/></g><path d="M1040 1003l36-7.500v69l-36-7.500z" fill="#2b5cb8"/><path d="M1040 1003l36-7.500v34l-36 3z" fill="#3567c5"/><text x="1057" y="1043" font-size="33" fill="#fff" text-anchor="middle" font-weight="bold" transform="translate(0 0)">W</text></g>
<rect x="1131.500" y="1008" width="1.200" height="48" fill="#4b4e62"/>
<!-- system information -->
<g fill="none" stroke="#c9ccd0" stroke-width="2.600" stroke-linecap="round"><circle cx="1190" cy="1000" r="4.500" stroke-width="2.200"/><path d="M1187.500 1004c-4 10-14 18-20 26-5 7-3 16 4 20"/><path d="M1192.500 1004c4 10 14 18 20 26 5 7 3 16-4 20"/><path d="M1196 1014h18" stroke-width="1.600"/></g><g><rect x="1177" y="1037" width="26" height="17" rx="1.500" fill="#33363b"/><rect x="1180" y="1041" width="20" height="3" fill="#55595f"/><g stroke="#c9ccd0" stroke-width="2.200"><path d="M1180.500 1054v9M1185.500 1054v9M1190.500 1054v9M1195.500 1054v9M1200 1054v9"/></g></g>
<!-- textedit -->
<g transform="rotate(-6 1272 1030)"><rect x="1246" y="1000" width="50" height="62" rx="1.500" fill="#fcfcfc"/><g stroke="#c9cdd6" stroke-width="1"><path d="M1246 1008h50M1246 1013h50M1246 1018h50M1246 1023h50M1246 1028h50M1246 1033h50M1246 1038h50M1246 1043h50M1246 1048h50M1246 1053h50M1246 1058h50"/></g><path d="M1253 1000v62" stroke="#f2a9ae" stroke-width="1"/></g><path d="M1300 1000l4 1.500-21 56-5 5 1-7z" fill="#aebfd6" stroke="#7c8ea8" stroke-width="1"/>
<!-- itunes -->
<g><circle cx="1353" cy="1030" r="34" fill="url(#gIt)"/><circle cx="1353" cy="1030" r="30" fill="#fbfbfd"/><path d="M1346 1015.500l20-4.500v27.500a6.500 5.500 0 1 1-4-5v-14.500l-12 2.800v20.700a6.500 5.500 0 1 1-4-5z" fill="url(#gNote)"/></g>
<rect x="1412.500" y="996" width="1.200" height="72" fill="#4b4e62"/>
<!-- box -->
<g><path d="M1447 1000h14l3 4h14v16h-31z" fill="#3f8fd2"/><path d="M1449 1030l22 10 22-10v20l-22 12-22-12z" fill="#c9782c"/><path d="M1471 1040l22-10v20l-22 12z" fill="#a85f1e"/><path d="M1449 1030l-10 8 22 11 10-9zM1493 1030l11 7-22 12-11-9z" fill="#e3a868"/><path d="M1449 1030l-9-9 21-9 10 8zM1493 1030l10-9-21-9-11 8z" fill="#d99b5b"/><path d="M1450 1015l21-9 21 9v16l-21 9-21-9z" fill="#f2d813" opacity=".92"/><path d="M1450 1015l21 8 21-8-21-9z" fill="#f9ee6a" opacity=".95"/><path d="M1471 1023v17" stroke="#d9bf10" stroke-width="1"/></g>
<!-- trash -->
<g><path d="M1527 1006h54l-5 52a5 5 0 0 1-5 4.500h-34a5 5 0 0 1-5-4.500z" fill="url(#gTr)" opacity=".92"/><ellipse cx="1554" cy="1006" rx="27" ry="5.500" fill="#2b2d31"/><path d="M1534 1004l6-9 8 4 5-7 9 5 7-4 5 10-8 5-10-3-9 4-8-2z" fill="#e9e9ec"/><path d="M1547 1000l5-4 4 5-4 3z" fill="#3b7bd6"/><path d="M1558 1001l5-3 3 5-5 2z" fill="#d94b3a"/><path d="M1540 1001l4-3 2 4-3 2z" fill="#555"/><path d="M1566 1001l4 3-5 3z" fill="#6a6a6a"/></g>
<!-- running dots -->
<g fill="#a6a8bd"><circle cx="174" cy="1075" r="1.700"/><circle cx="418.750" cy="1075" r="1.700"/><circle cx="500.500" cy="1075" r="1.700"/><circle cx="582" cy="1075" r="1.700"/><circle cx="826.500" cy="1075" r="1.700"/><circle cx="989.500" cy="1075" r="1.700"/><circle cx="1071" cy="1075" r="1.700"/></g>
</svg>
<!-- domclick watermark -->
<svg class="abs" style="left:60px;top:983px" width="280" height="62" viewBox="0 0 280 62"><g fill="#fff" opacity=".3"><path d="M29.800 2L58 14.900V26.500H46.500V20.500L29.800 11.200 13.600 20.500V45H29.800V56.600H6.700L2.500 52.400V14.900z"/><path d="M57.600 32L35.400 56.600V38.500Q35.400 33 41 32.600z"/></g><text x="70" y="48" font-family="'Liberation Sans',sans-serif" font-weight="bold" font-size="45" letter-spacing="1.500" fill="#fff" opacity=".3">Домклик</text></svg>

</div>
</body>
</html>
